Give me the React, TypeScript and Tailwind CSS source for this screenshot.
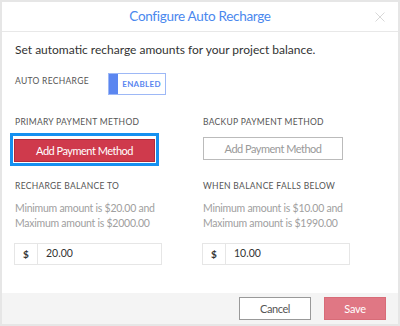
import React from 'react';

type AmountField = {
  label: string;
  min: string;
  max: string;
  value: string;
};

const fields: AmountField[] = [
  { label: 'Recharge Balance To', min: '$20.00', max: '$2000.00', value: '20.00' },
  { label: 'When Balance Falls Below', min: '$10.00', max: '$1990.00', value: '10.00' },
];

function Label({ children }: { children: React.ReactNode }) {
  return (
    <div className="text-[8.5px] uppercase tracking-[0.3px] text-[#555] leading-[10px]">{children}</div>
  );
}

export default function App() {
  return (
    <div
      className="w-[400px] h-[326px] border-2 border-[#e6e6e6] bg-white flex flex-col overflow-hidden"
      style={{ fontFamily: 'Lato, "Open Sans", sans-serif' }}
    >
      {/* Header */}
      <div className="relative h-[30px] shrink-0 border-b border-[#e8e8e8] flex items-center justify-center">
        <span className="text-[13.5px] tracking-[-0.3px] text-[#4a88ee] leading-none">Configure Auto Recharge</span>
        <svg
          className="absolute right-[13px] top-[10px]"
          width="10"
          height="10"
          viewBox="0 0 10 10"
          stroke="#d8d8d8"
          strokeWidth="1"
        >
          <path d="M0.5 0.5 L9.5 9.5 M9.5 0.5 L0.5 9.5" />
        </svg>
      </div>

      {/* Body */}
      <div className="flex-1 px-[13px]">
        <p className="mt-[11px] text-[12px] leading-[14px] text-[#333]">
          Set automatic recharge amounts for your project balance.
        </p>

        <div className="mt-[16px] flex items-start">
          <div className="w-[93px] mt-[3px]">
            <Label>Auto Recharge</Label>
          </div>
          <div className="flex h-[22px] w-[58px] border border-[#9db8f6]">
            <div className="w-[9px] bg-[#5b86f0]" />
            <div className="flex-1 flex items-center justify-center text-[8px] font-bold tracking-[0.3px] text-[#5b86f0]">
              ENABLED
            </div>
          </div>
        </div>

        <div className="mt-[22px] grid grid-cols-[188px_1fr]">
          <div>
            <Label>Primary Payment Method</Label>
            <div className="mt-[6px] -ml-[5px] w-[149px] border-[3px] border-[#1590f0] p-[1px]">
              <button className="w-full h-[23px] bg-[#cf3a4c] border border-[#b02c3c] text-white text-[11px] tracking-[-0.5px] leading-none">
                Add Payment Method
              </button>
            </div>
          </div>
          <div>
            <Label>Backup Payment Method</Label>
            <button className="mt-[10px] w-[140px] h-[23px] border border-[#bbb] bg-white text-[#999] text-[11px] tracking-[-0.5px] leading-none">
              Add Payment Method
            </button>
          </div>
        </div>

        <div className="mt-[15px] grid grid-cols-[188px_1fr]">
          {fields.map((f) => (
            <div key={f.label}>
              <Label>{f.label}</Label>
              <p className="mt-[10px] text-[10.5px] tracking-[-0.25px] leading-[15px] text-[#a0a0a0]">
                Minimum amount is {f.min} and
                <br />
                Maximum amount is {f.max}
              </p>
              <div className="mt-[12px] -ml-[1px] flex h-[22px] w-[148px] border border-[#e6e6e6]">
                <div className="w-[23px] flex items-center justify-center border-r border-[#e6e6e6] text-[10px] font-bold text-[#333]">
                  $
                </div>
                <div className="flex-1 flex items-center pl-[8px] text-[10.5px] text-[#333]">{f.value}</div>
              </div>
            </div>
          ))}
        </div>
      </div>

      {/* Footer */}
      <div className="h-[31px] shrink-0 bg-[#f4f4f4] flex items-center justify-end gap-[13px] pr-[12px]">
        <button className="w-[72px] h-[23px] border border-[#999] bg-white text-[11px] tracking-[-0.4px] text-[#555] leading-none">
          Cancel
        </button>
        <button className="w-[62px] h-[23px] bg-[#e07784] border border-[#d86c78] text-[11px] tracking-[-0.3px] text-white leading-none">
          Save
        </button>
      </div>
    </div>
  );
}
